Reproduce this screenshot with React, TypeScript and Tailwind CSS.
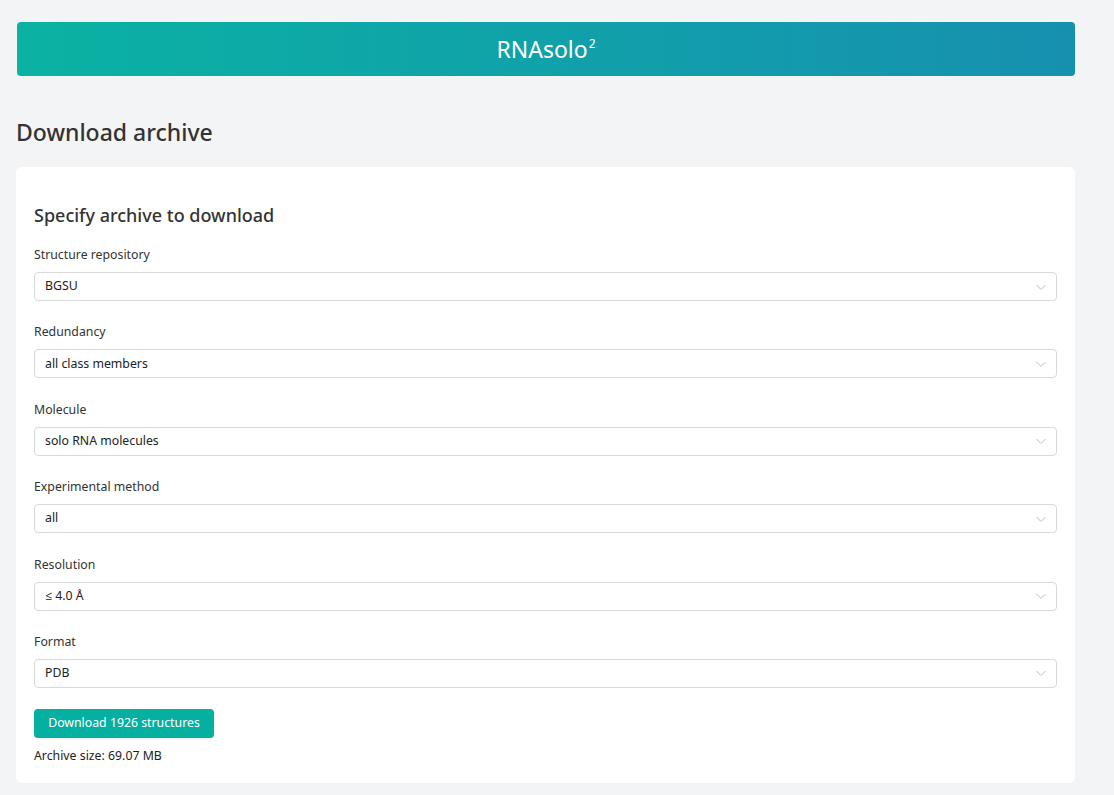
import React from "react";

const fields: { label: string; value: string }[] = [
  { label: "Structure repository", value: "BGSU" },
  { label: "Redundancy", value: "all class members" },
  { label: "Molecule", value: "solo RNA molecules" },
  { label: "Experimental method", value: "all" },
  { label: "Resolution", value: "≤ 4.0 Å" },
  { label: "Format", value: "PDB" },
];

function Chevron() {
  return (
    <svg width="12" height="12" viewBox="0 0 12 12" fill="none">
      <path d="M1.5 4 L6 8.5 L10.5 4" stroke="#bfbfbf" strokeWidth="1" />
    </svg>
  );
}

export default function App() {
  return (
    <div
      className="min-h-[795px] bg-[#f3f4f6] text-[#333333]"
      style={{ fontFamily: '"Noto Sans", "Open Sans", sans-serif' }}
    >
      <div className="pl-[17px] pr-[39px] pt-[22px]">
        <div className="h-[54px] rounded-[4px] bg-gradient-to-r from-[#0bb2a2] to-[#1790b0] flex items-center justify-center">
          <span className="text-white text-[23px] leading-none">
            RNAsolo<sup className="text-[12px] relative -top-[10px] ml-[1px]">2</sup>
          </span>
        </div>
      </div>
      <div className="pl-[16px] pr-[39px]">
        <h1 className="mt-[40px] text-[23px] font-medium leading-[32px] text-[#333333]">Download archive</h1>
        <div className="mt-[19px] bg-white rounded-[6px] px-[18px] pt-[34px] pb-[17px]">
          <h2 className="text-[18px] font-medium leading-[28px] text-[#333333]">Specify archive to download</h2>
          <div className="mt-[17px] flex flex-col gap-[22.4px]">
            {fields.map((f) => (
              <div key={f.label} className="flex flex-col">
                <div className="text-[12.3px] leading-[18px] h-[18px] text-[#333333]">{f.label}</div>
                <div className="mt-[8px] h-[29px] border border-[#d9d9d9] rounded-[4px] flex items-center justify-between pl-[10px] pr-[9px]">
                  <span className="text-[12.3px] text-[#222222]">{f.value}</span>
                  <Chevron />
                </div>
              </div>
            ))}
          </div>
          <button className="mt-[21px] h-[29px] w-[180px] rounded-[4px] bg-[#05b0a0] text-white text-[12.3px] flex items-center justify-center shadow-[0_2px_0_rgba(0,0,0,0.03)]">
            Download 1926 structures
          </button>
          <div className="mt-[8px] text-[12.3px] leading-[20px] text-[#222222]">Archive size: 69.07 MB</div>
        </div>
      </div>
    </div>
  );
}
